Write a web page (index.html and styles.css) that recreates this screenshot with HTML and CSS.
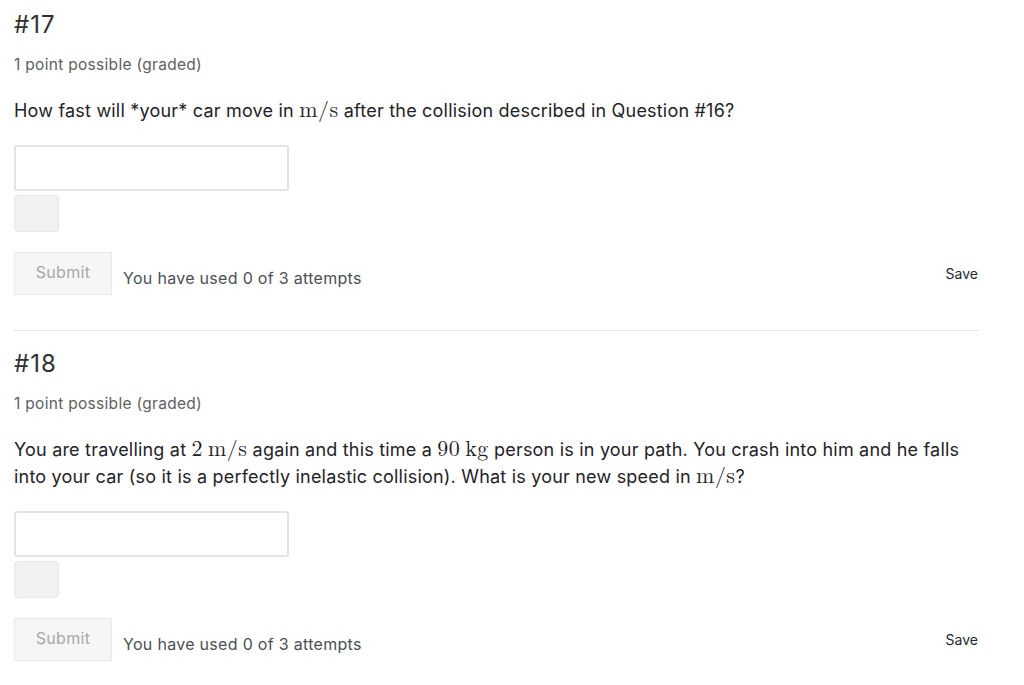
FILE: index.html
```html
<!DOCTYPE html>
<html lang="en">
<head>
<meta charset="utf-8">
<title>Problems</title>
<link rel="stylesheet" href="styles.css">
</head>
<body>
<main class="page">
  <section class="problem">
    <h2 class="problem-title">#17</h2>
    <div class="problem-meta">1 point possible (graded)</div>
    <p class="problem-text">How fast will *your* car move in <span class="math">m/s</span> after the collision described in Question #16?</p>
    <input class="answer-input" type="text" aria-label="answer">
    <div class="status-box"></div>
    <div class="actions">
      <button class="submit-btn" type="button">Submit</button>
      <span class="attempts">You have used 0 of 3 attempts</span>
      <button class="save-btn" type="button">Save</button>
    </div>
  </section>
  <section class="problem">
    <h2 class="problem-title">#18</h2>
    <div class="problem-meta">1 point possible (graded)</div>
    <p class="problem-text">You are travelling at <span class="math">2&#8201;m/s</span> again and this time a <span class="math">90&#8201;kg</span> person is in your path. You crash into him and he falls into your car (so it is a perfectly inelastic collision). What is your new speed in <span class="math">m/s</span>?</p>
    <input class="answer-input" type="text" aria-label="answer">
    <div class="status-box"></div>
    <div class="actions">
      <button class="submit-btn" type="button">Submit</button>
      <span class="attempts">You have used 0 of 3 attempts</span>
      <button class="save-btn" type="button">Save</button>
    </div>
  </section>
</main>
</body>
</html>
```
FILE: styles.css
```css
html, body {
  margin: 0;
  padding: 0;
  background: #ffffff;
}
body {
  font-family: Inter, "Noto Sans", Arial, sans-serif;
  color: #1f2328;
}
.page {
  width: 965px;
  padding-left: 14px;
}
.problem {
  display: flex;
  flex-direction: column;
  align-items: flex-start;
  padding-top: 12px;
  padding-bottom: 35px;
}
.problem + .problem {
  border-top: 1px solid #e5e5e5;
  padding-top: 20px;
}
.problem-title {
  margin: 0;
  font-size: 24px;
  line-height: 26px;
  font-weight: 400;
  letter-spacing: 1px;
  color: #313131;
}
.problem-meta {
  margin-top: 17px;
  font-size: 15.5px;
  line-height: 20px;
  letter-spacing: 0.3px;
  color: #5f5f5f;
}
.problem-text {
  margin: 22px 0 0 0;
  width: 955px;
  font-size: 18px;
  line-height: 27px;
  letter-spacing: 0.2px;
  color: #1f2328;
}
.math {
  font-family: "Latin Modern Roman", "Liberation Serif", "DejaVu Serif", serif;
  font-size: 1.22em;
  line-height: 1;
  letter-spacing: 0.5px;
}
.answer-input {
  margin-top: 21px;
  box-sizing: border-box;
  width: 275px;
  height: 46px;
  border: 2px solid #e3e3e3;
  border-radius: 3px;
  background: #fff;
  padding: 0 8px;
  font: inherit;
}
.status-box {
  margin-top: 4px;
  box-sizing: border-box;
  width: 45px;
  height: 37px;
  background: #f1f1f1;
  border: 1px solid #e6e6e6;
  border-radius: 4px;
}
.actions {
  margin-top: 20px;
  width: 100%;
  display: flex;
  align-items: flex-start;
}
.submit-btn {
  box-sizing: border-box;
  width: 98px;
  height: 43px;
  background: #f6f6f6;
  border: 1px solid #e8e8e8;
  border-radius: 0;
  color: #a8a8a8;
  font-family: Inter, "Noto Sans", Arial, sans-serif;
  font-size: 16px;
  letter-spacing: 0.3px;
  padding: 0 0 4px 0;
}
.attempts {
  margin-left: 11px;
  margin-top: 16px;
  font-size: 16px;
  line-height: 20px;
  letter-spacing: 0.3px;
  color: #4a4f55;
}
.save-btn {
  margin-left: auto;
  margin-top: 13px;
  margin-right: 1px;
  background: none;
  border: 0;
  padding: 0;
  font-family: Inter, "Noto Sans", Arial, sans-serif;
  font-size: 14px;
  line-height: 18px;
  color: #1b2a33;
}
```
